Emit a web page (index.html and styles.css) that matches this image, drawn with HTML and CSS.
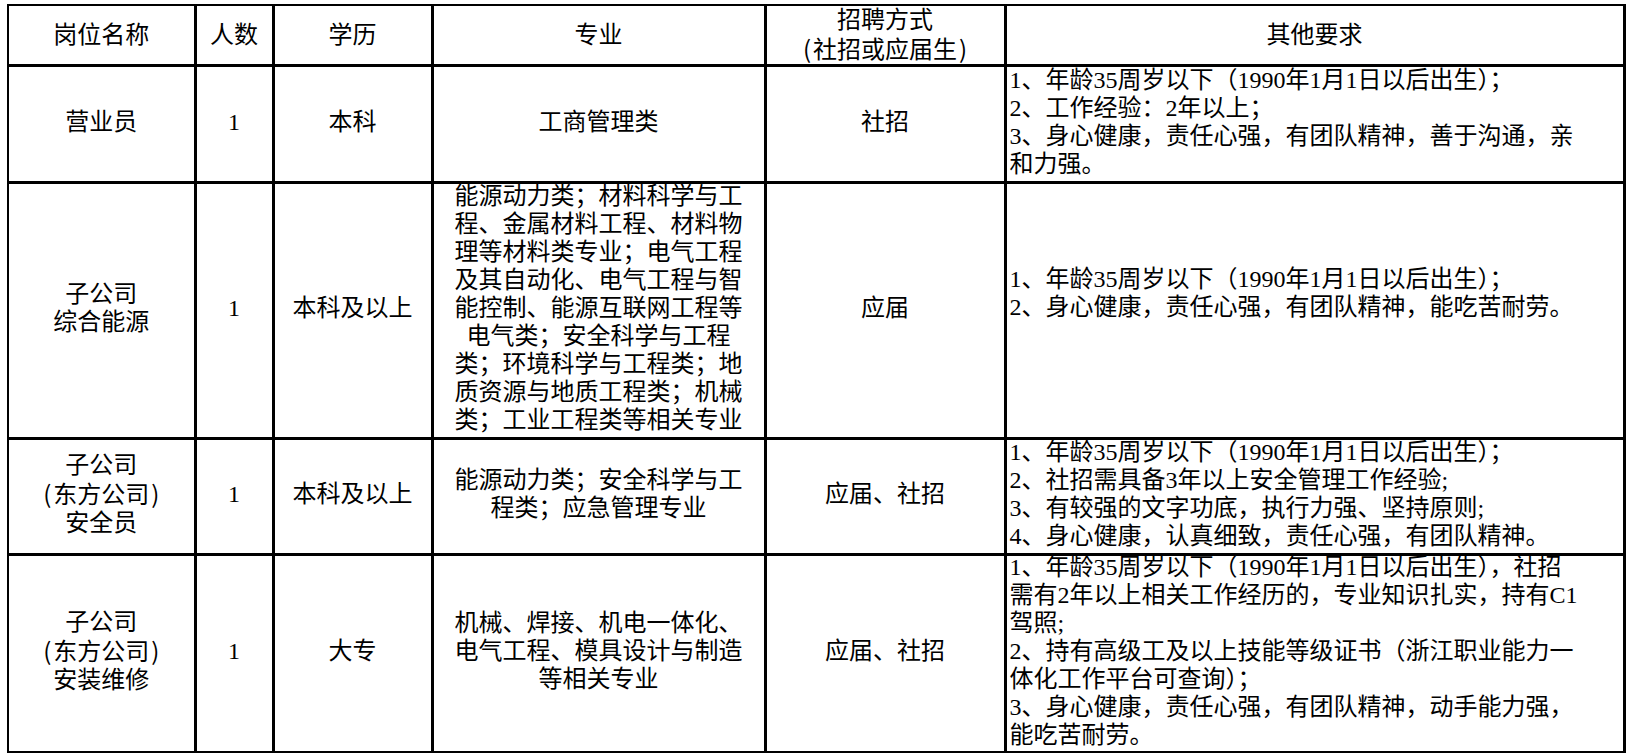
FILE: index.html
```html
<!DOCTYPE html>
<html lang="zh-CN">
<head>
<meta charset="utf-8">
<title>招聘岗位</title>
<link rel="stylesheet" href="styles.css">
</head>
<body>
<table class="jobs">
  <colgroup>
    <col class="c-name">
    <col class="c-num">
    <col class="c-edu">
    <col class="c-major">
    <col class="c-way">
    <col class="c-req">
  </colgroup>
  <thead>
    <tr class="r-head">
      <th>岗位名称</th>
      <th>人数</th>
      <th>学历</th>
      <th>专业</th>
      <th>招聘方式<br><span class="sans">(</span>社招或应届生<span class="sans">)</span></th>
      <th>其他要求</th>
    </tr>
  </thead>
  <tbody>
    <tr class="r1">
      <td><div class="tx">营业员</div></td>
      <td><div class="tx">1</div></td>
      <td><div class="tx">本科</div></td>
      <td><div class="tx">工商管理类</div></td>
      <td><div class="tx">社招</div></td>
      <td class="req"><div class="tx">1、年龄35周岁以下（1990年1月1日以后出生）；<br>2、工作经验：2年以上；<br>3、身心健康，责任心强，有团队精神，善于沟通，亲<br>和力强。</div></td>
    </tr>
    <tr class="r2">
      <td><div class="tx">子公司<br>综合能源</div></td>
      <td><div class="tx">1</div></td>
      <td><div class="tx">本科及以上</div></td>
      <td><div class="tx">能源动力类；材料科学与工<br>程、金属材料工程、材料物<br>理等材料类专业；电气工程<br>及其自动化、电气工程与智<br>能控制、能源互联网工程等<br>电气类；安全科学与工程<br>类；环境科学与工程类；地<br>质资源与地质工程类；机械<br>类；工业工程类等相关专业</div></td>
      <td><div class="tx">应届</div></td>
      <td class="req req-up"><div class="tx">1、年龄35周岁以下（1990年1月1日以后出生）；<br>2、身心健康，责任心强，有团队精神，能吃苦耐劳。</div></td>
    </tr>
    <tr class="r3">
      <td><div class="tx">子公司<br><span class="sans">(</span>东方公司<span class="sans">)</span><br>安全员</div></td>
      <td><div class="tx">1</div></td>
      <td><div class="tx">本科及以上</div></td>
      <td><div class="tx">能源动力类；安全科学与工<br>程类；应急管理专业</div></td>
      <td><div class="tx">应届、社招</div></td>
      <td class="req"><div class="tx">1、年龄35周岁以下（1990年1月1日以后出生）；<br>2、社招需具备3年以上安全管理工作经验;<br>3、有较强的文字功底，执行力强、坚持原则;<br>4、身心健康，认真细致，责任心强，有团队精神。</div></td>
    </tr>
    <tr class="r4">
      <td><div class="tx">子公司<br><span class="sans">(</span>东方公司<span class="sans">)</span><br>安装维修</div></td>
      <td><div class="tx">1</div></td>
      <td><div class="tx">大专</div></td>
      <td><div class="tx">机械、焊接、机电一体化、<br>电气工程、模具设计与制造<br>等相关专业</div></td>
      <td><div class="tx">应届、社招</div></td>
      <td class="req"><div class="tx">1、年龄35周岁以下（1990年1月1日以后出生），社招<br>需有2年以上相关工作经历的，专业知识扎实，持有C1<br>驾照;<br>2、持有高级工及以上技能等级证书（浙江职业能力一<br>体化工作平台可查询）；<br>3、身心健康，责任心强，有团队精神，动手能力强，<br>能吃苦耐劳。</div></td>
    </tr>
  </tbody>
</table>
</body>
</html>
```

FILE: styles.css
```css
html, body {
  margin: 0;
  padding: 0;
  background: #ffffff;
}

body {
  padding: 4px 0 0 7px;
  font-family: "Liberation Serif", "Noto Sans CJK SC", sans-serif;
  font-size: 24px;
  line-height: 28px;
  color: #000000;
}

.jobs {
  border-collapse: collapse;
  table-layout: fixed;
  width: 1616px;
}

.c-name { width: 187px; }
.c-num { width: 78px; }
.c-edu { width: 159px; }
.c-major { width: 333px; }
.c-way { width: 240px; }
.c-req { width: 619px; }

.jobs th,
.jobs td {
  border: 3px solid #000000;
  padding: 0;
  text-align: center;
  vertical-align: middle;
  font-weight: normal;
  white-space: nowrap;
}

.jobs thead th {
  border-top-width: 2px;
}

.jobs th:first-child,
.jobs td:first-child {
  border-left-width: 2px;
}

.tx {
  margin-top: -5px;
}

.sans {
  font-family: "Noto Sans CJK SC", sans-serif;
  padding: 0 2px;
}

.jobs td.req {
  text-align: left;
  padding-left: 3px;
}

.jobs td.req-up {
  padding-bottom: 30px;
}

.r-head { height: 57px; }
.r1 { height: 117px; }
.r2 { height: 256px; }
.r3 { height: 116px; }
.r4 { height: 198px; }
```
